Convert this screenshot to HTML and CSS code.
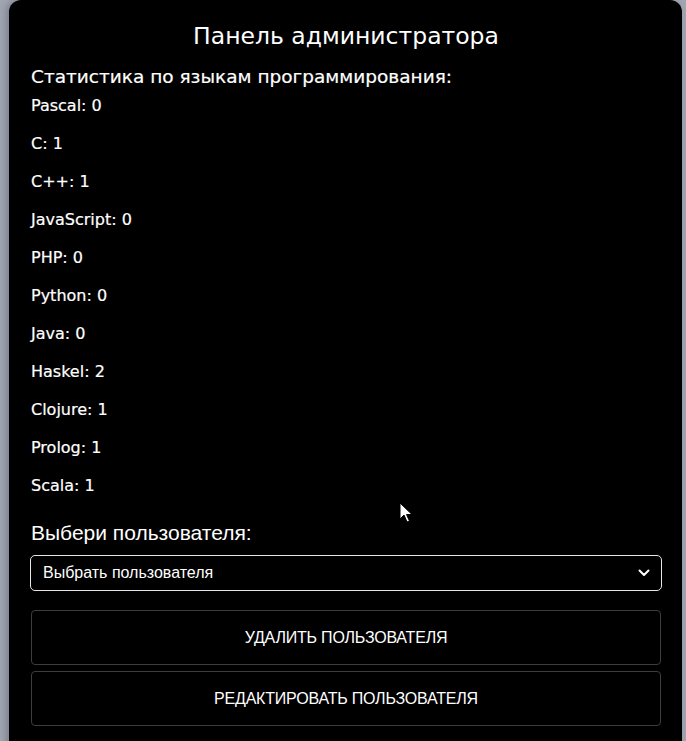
FILE: index.html
```html
<!DOCTYPE html>
<html lang="ru">
<head>
<meta charset="utf-8">
<link rel="stylesheet" href="styles.css">
</head>
<body>
<div class="panel">
  <h1 class="title">Панель администратора</h1>
  <h2 class="subtitle">Статистика по языкам программирования:</h2>
  <div class="stats">
    <div class="stat">Pascal: 0</div>
    <div class="stat">C: 1</div>
    <div class="stat">C++: 1</div>
    <div class="stat">JavaScript: 0</div>
    <div class="stat">PHP: 0</div>
    <div class="stat">Python: 0</div>
    <div class="stat">Java: 0</div>
    <div class="stat">Haskel: 2</div>
    <div class="stat">Clojure: 1</div>
    <div class="stat">Prolog: 1</div>
    <div class="stat">Scala: 1</div>
  </div>
  <div class="pick-label">Выбери пользователя:</div>
  <div class="select">
    <span>Выбрать пользователя</span>
    <svg class="chev" width="12" height="8" viewBox="0 0 12 8"><path d="M1.5 1.5 L6 6 L10.5 1.5" fill="none" stroke="#fff" stroke-width="2" stroke-linecap="round" stroke-linejoin="round"/></svg>
  </div>
  <div class="actions">
    <div class="btn">УДАЛИТЬ ПОЛЬЗОВАТЕЛЯ</div>
    <div class="btn">РЕДАКТИРОВАТЬ ПОЛЬЗОВАТЕЛЯ</div>
  </div>
  <svg class="cursor" width="14" height="22" viewBox="0 0 14 22"><path d="M1 1 L1 17 L5 13 L8 20 L10.5 19 L7.5 12.5 L13 12.5 Z" fill="#fff" stroke="#000" stroke-width="1"/></svg>
</div>
</body>
</html>
```

FILE: styles.css
```css
html, body {
  margin: 0;
  padding: 0;
  background: #a0a5b1;
  height: 100%;
  overflow: hidden;
}
.panel {
  position: relative;
  box-sizing: border-box;
  margin-left: 9px;
  width: 673px;
  min-height: 760px;
  background: #000;
  border-radius: 12px;
  padding: 20px 20px 0 21px;
  color: #fff;
  font-family: "DejaVu Sans", sans-serif;
  box-shadow: -3px 0 6px rgba(60, 64, 80, 0.35);
}
.title {
  margin: 0;
  font-size: 23.5px;
  line-height: 32px;
  font-weight: 400;
  text-align: center;
}
.subtitle {
  margin: 14px 0 0;
  padding-left: 1px;
  font-size: 18.5px;
  line-height: 22px;
  font-weight: 400;
  -webkit-text-stroke: 0.2px #fff;
}
.stats {
  display: flex;
  flex-direction: column;
  gap: 20px;
  margin-top: 9px;
  padding-left: 1px;
}
.stat {
  font-size: 16px;
  line-height: 18px;
  -webkit-text-stroke: 0.2px #fff;
}
.pick-label {
  margin-top: 27px;
  padding-left: 1px;
  font-family: "Liberation Sans", Arial, sans-serif;
  font-size: 21px;
  line-height: 22px;
}
.select {
  margin-top: 11px;
  height: 36px;
  box-sizing: border-box;
  border: 1px solid #e6e6e6;
  border-radius: 5px;
  display: flex;
  align-items: center;
  justify-content: space-between;
  padding: 0 11px 0 12px;
  font-family: "Liberation Sans", Arial, sans-serif;
  font-size: 16px;
}
.actions {
  margin-top: 19px;
  display: flex;
  flex-direction: column;
  gap: 6px;
  padding: 0 1px;
}
.btn {
  height: 55px;
  box-sizing: border-box;
  border: 1px solid #3d3d3d;
  border-radius: 4px;
  display: flex;
  align-items: center;
  justify-content: center;
  font-family: "Liberation Sans", Arial, sans-serif;
  font-size: 16px;
  letter-spacing: -0.2px;
}
.cursor {
  position: absolute;
  left: 390px;
  top: 502px;
}
```
